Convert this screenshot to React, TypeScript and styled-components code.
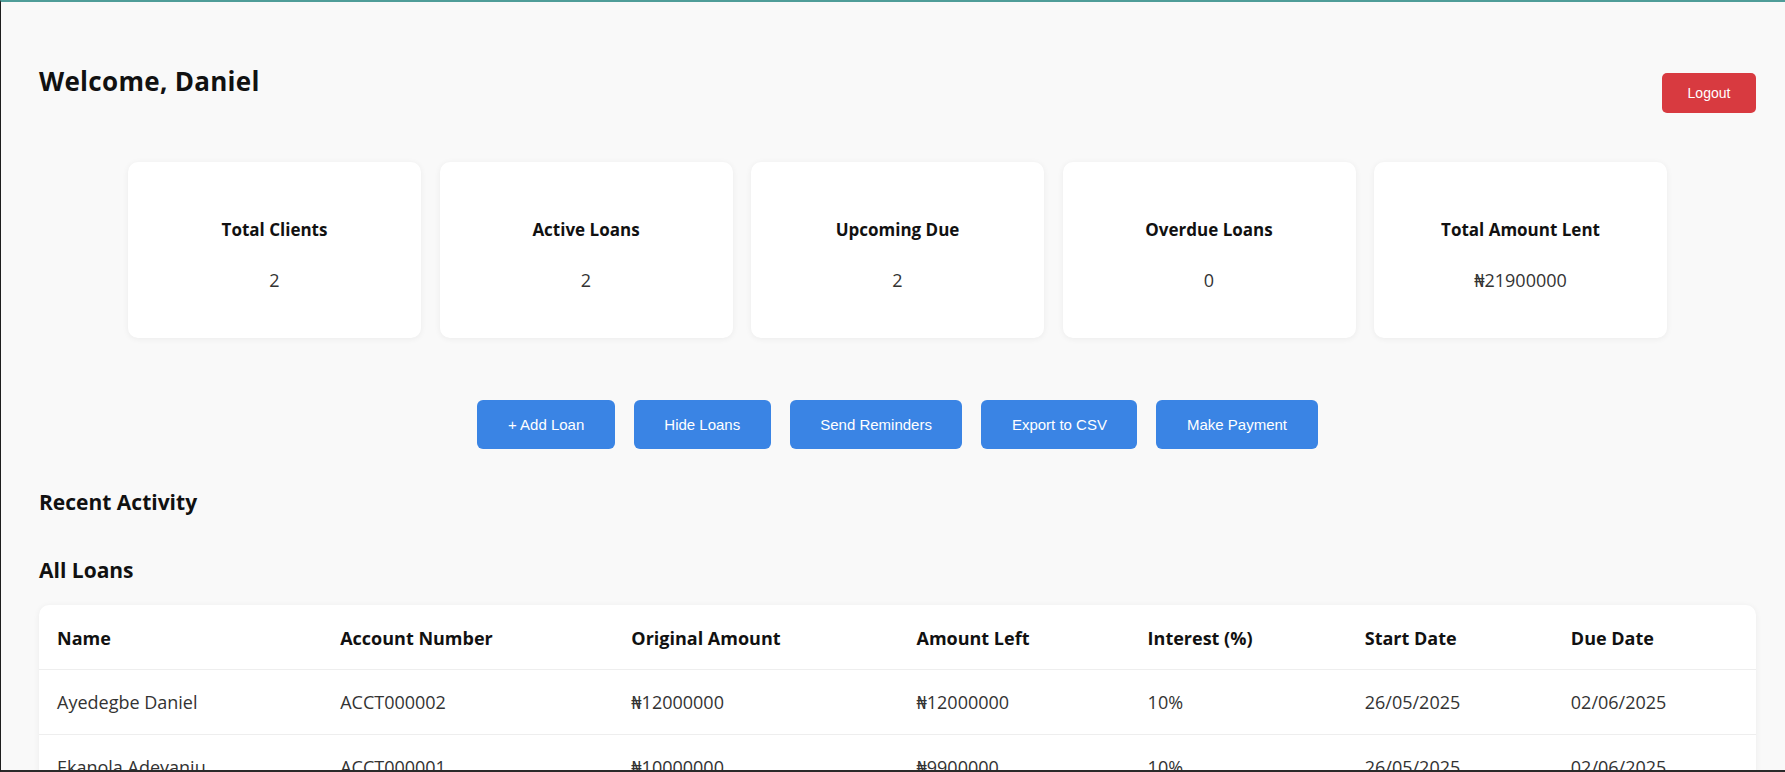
import React from 'react'
import styled, { createGlobalStyle } from 'styled-components'

const GlobalStyle = createGlobalStyle`
    html, body {
        margin: 0;
        padding: 0;
        background: #f9f9f9;
    }
    body {
        font-family: "Open Sans", "Noto Sans", Arial, sans-serif;
        color: #111;
    }
    * {
        box-sizing: border-box;
    }
`

type Stat = { title: string; value: string }
type Loan = {
    name: string
    account: string
    original: string
    left: string
    interest: string
    start: string
    due: string
}

const stats: Stat[] = [
    { title: 'Total Clients', value: '2' },
    { title: 'Active Loans', value: '2' },
    { title: 'Upcoming Due', value: '2' },
    { title: 'Overdue Loans', value: '0' },
    { title: 'Total Amount Lent', value: '₦21900000' }
]

const actions = ['+ Add Loan', 'Hide Loans', 'Send Reminders', 'Export to CSV', 'Make Payment']

const columns = [
    { label: 'Name', width: 283 },
    { label: 'Account Number', width: 291 },
    { label: 'Original Amount', width: 285 },
    { label: 'Amount Left', width: 231 },
    { label: 'Interest (%)', width: 217 },
    { label: 'Start Date', width: 206 },
    { label: 'Due Date', width: 203 }
]

const loans: Loan[] = [
    {
        name: 'Ayedegbe Daniel',
        account: 'ACCT000002',
        original: '₦12000000',
        left: '₦12000000',
        interest: '10%',
        start: '26/05/2025',
        due: '02/06/2025'
    },
    {
        name: 'Ekanola Adeyanju',
        account: 'ACCT000001',
        original: '₦10000000',
        left: '₦9900000',
        interest: '10%',
        start: '26/05/2025',
        due: '02/06/2025'
    }
]

export default function App() {
    return (
        <Frame>
            <GlobalStyle/>
            <Page>
                <Header>
                    <Welcome>Welcome, Daniel</Welcome>
                    <LogoutButton>Logout</LogoutButton>
                </Header>
                <StatsRow>
                    {stats.map(stat => (
                        <StatCard key={stat.title}>
                            <StatTitle>{stat.title}</StatTitle>
                            <StatValue>{stat.value}</StatValue>
                        </StatCard>
                    ))}
                </StatsRow>
                <ActionsRow>
                    {actions.map(action => (
                        <ActionButton key={action}>{action}</ActionButton>
                    ))}
                </ActionsRow>
                <SectionTitle $top={39}>Recent Activity</SectionTitle>
                <SectionTitle $top={40}>All Loans</SectionTitle>
                <TableCard>
                    <Table>
                        <colgroup>
                            {columns.map(col => (
                                <col key={col.label} style={{ width: col.width }}/>
                            ))}
                        </colgroup>
                        <thead>
                            <tr>
                                {columns.map(col => (
                                    <HeadCell key={col.label}>{col.label}</HeadCell>
                                ))}
                            </tr>
                        </thead>
                        <tbody>
                            {loans.map(loan => (
                                <tr key={loan.account}>
                                    <Cell>{loan.name}</Cell>
                                    <Cell>{loan.account}</Cell>
                                    <Cell>{loan.original}</Cell>
                                    <Cell>{loan.left}</Cell>
                                    <Cell>{loan.interest}</Cell>
                                    <Cell>{loan.start}</Cell>
                                    <Cell>{loan.due}</Cell>
                                </tr>
                            ))}
                        </tbody>
                    </Table>
                </TableCard>
            </Page>
        </Frame>
    )
}

const Frame = styled.div`
    height: 100vh;
    overflow: hidden;
    border-top: 2px solid #4f9d99;
    border-left: 1px solid #1e1e1e;
    border-bottom: 2px solid #2a2a2a;
`

const Page = styled.div`
    padding: 63px 29px 0 38px;
`

const Header = styled.div`
    display: flex;
    justify-content: space-between;
    align-items: flex-start;
`

const Welcome = styled.h2`
    margin: 0;
    font-size: 26px;
    line-height: 33px;
    letter-spacing: 0.3px;
    font-weight: 700;
    color: #111;
`

const LogoutButton = styled.button`
    margin-top: 8px;
    width: 94px;
    height: 40px;
    border: none;
    border-radius: 5px;
    background: #d83a40;
    color: #fff;
    font-family: "Liberation Sans", Arial, sans-serif;
    font-size: 14px;
`

const StatsRow = styled.div`
    display: flex;
    justify-content: center;
    gap: 18.5px;
    margin-top: 49px;
`

const StatCard = styled.div`
    width: 293px;
    height: 176px;
    background: #fff;
    border-radius: 10px;
    box-shadow: 0 1px 6px rgba(0, 0, 0, 0.06);
    display: flex;
    flex-direction: column;
    align-items: center;
    justify-content: center;
`

const StatTitle = styled.div`
    font-size: 17px;
    line-height: 24px;
    font-weight: 700;
    color: #111;
    margin-top: 10px;
`

const StatValue = styled.div`
    margin-top: 26px;
    font-size: 18px;
    line-height: 24px;
    color: #333;
`

const ActionsRow = styled.div`
    display: flex;
    justify-content: center;
    gap: 19px;
    margin-top: 62px;
`

const ActionButton = styled.button`
    height: 49px;
    padding: 0 30.5px;
    border: none;
    border-radius: 6px;
    background: #3a84e4;
    color: #fff;
    font-family: "Liberation Sans", Arial, sans-serif;
    font-size: 15px;
`

const SectionTitle = styled.h3<{ $top: number }>`
    margin: ${({ $top }) => $top}px 0 0;
    font-size: 21px;
    line-height: 28px;
    font-weight: 700;
    color: #111;
`

const TableCard = styled.div`
    margin-top: 21px;
    background: #fff;
    border-radius: 10px;
    box-shadow: 0 1px 6px rgba(0, 0, 0, 0.06);
    overflow: hidden;
`

const Table = styled.table`
    width: 100%;
    table-layout: fixed;
    border-collapse: collapse;
`

const HeadCell = styled.th`
    height: 64px;
    padding: 3px 18px 0;
    text-align: left;
    font-size: 18px;
    font-weight: 700;
    color: #111;
    border-bottom: 1px solid #eee;
`

const Cell = styled.td`
    height: 65px;
    padding: 0 18px;
    font-size: 18px;
    color: #333;
    border-bottom: 1px solid #eee;
`
